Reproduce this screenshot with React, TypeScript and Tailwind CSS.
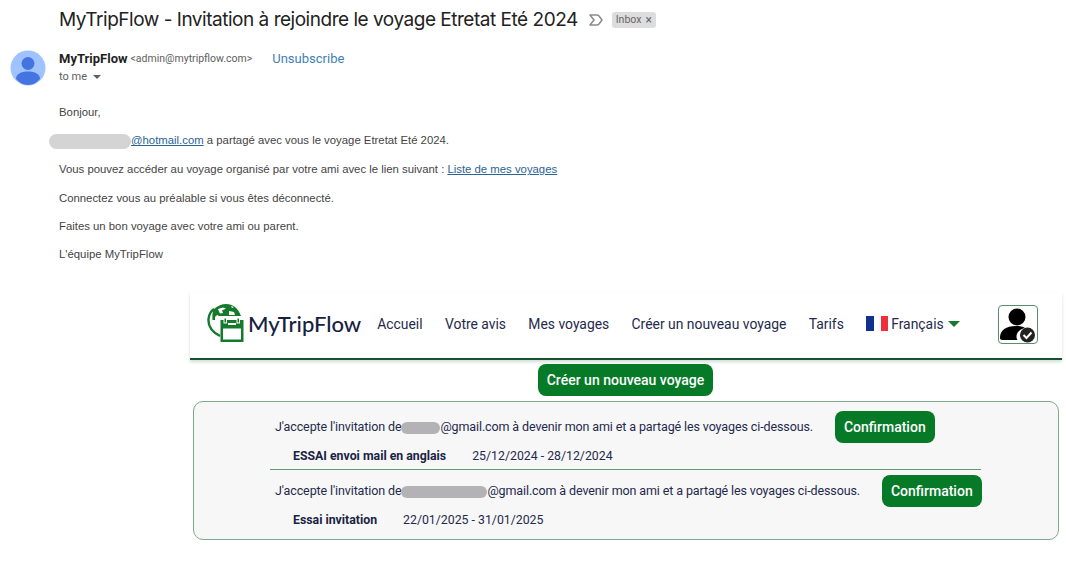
import React from "react";

function Avatar() {
  return (
    <svg width="36" height="36" viewBox="0 0 36 36" className="shrink-0">
      <circle cx="18" cy="18" r="17.5" fill="#a0c3ff" />
      <circle cx="18" cy="13.5" r="6.5" fill="#4374e0" />
      <path d="M6 29c0-5 5-7.500 12-7.500S30 24 30 29c-2.800 3-7 6-12 6S8.800 32 6 29z" fill="#4374e0" />
    </svg>
  );
}

function ImportanceMark() {
  return (
    <svg width="14" height="12" viewBox="0 0 14 12" fill="none" stroke="#8a8a8a" strokeWidth="1.500" strokeLinejoin="round">
      <path d="M1 1h7c1 0 1.500.4 2 1l3 4-3 4c-.5.6-1 1-2 1H1l4-5z" />
    </svg>
  );
}

function Logo() {
  return (
    <svg width="38" height="39" viewBox="0 0 38 39" className="shrink-0">
      <path d="M13 32C5 28 1 22 1.500 15 2 10 4 7 7 5" fill="none" stroke="#157a2b" strokeWidth="2.400" />
      <path d="M7 5C11 1.500 15 0 19 0c7 0 12 4 15 12H12l-2-1-2 2v3H5.500C5 11 5.500 8 7 5z" fill="#157a2b" />
      <path d="M11 5l5-1.500 3 1-4 2 1 2.500-3 .5-1-2zM22 7l5 1 1 3h-6zM24 2l3 1-2 1z" fill="#ffffff" />
      <rect x="13.500" y="16" width="23" height="22" fill="#157a2b" />
      <rect x="16" y="24.500" width="18" height="11" fill="#ffffff" />
      <rect x="17" y="14" width="2.500" height="5" fill="#157a2b" stroke="#ffffff" strokeWidth="1" />
      <rect x="30" y="14" width="2.500" height="5" fill="#157a2b" stroke="#ffffff" strokeWidth="1" />
      <rect x="21" y="19" width="8" height="2" fill="#ffffff" />
    </svg>
  );
}

function Flag() {
  return (
    <span className="flex h-[15px] w-[22px] shrink-0">
      <span className="flex-1 bg-[#12308f]" />
      <span className="flex-1 bg-white" />
      <span className="flex-1 bg-[#ee2f3f]" />
    </span>
  );
}

function UserCheck() {
  return (
    <svg width="36" height="36" viewBox="0 0 36 36">
      <circle cx="17" cy="10" r="8.500" fill="#000" />
      <path d="M2 33c-1 0-2-1-2-2 0-8 6-12 16-12 4 0 7 .6 9 2-5 1-8.500 4.500-8.500 8.500 0 1 .3 2.500 1 3.500z" fill="#000" />
      <circle cx="27.500" cy="28" r="7.500" fill="#222" />
      <path d="M23.500 28l3 3 5-5.500" stroke="#fff" strokeWidth="2" fill="none" />
    </svg>
  );
}

function Blur({ w }: { w: string }) {
  return <span className={`inline-block rounded-full align-middle ${w}`} />;
}

const NAV = ["Accueil", "Votre avis", "Mes voyages", "Créer un nouveau voyage", "Tarifs"];

export default function App() {
  return (
    <div className="h-[583px] w-[1066px] overflow-hidden bg-white font-['Liberation_Sans',sans-serif]">
      <div className="pl-[10px]">
        <div className="flex h-[40px] items-center pl-[49px]">
          <h1 className="whitespace-nowrap font-['Inter',sans-serif] text-[19px] font-normal tracking-[-0.48px] text-[#222222]">
            MyTripFlow - Invitation à rejoindre le voyage Etretat Eté 2024
          </h1>
          <span className="ml-[11px] flex"><ImportanceMark /></span>
          <span className="ml-[9px] flex h-[16px] w-[44px] items-center justify-center gap-[4px] rounded-[3px] bg-[#dddddd] font-['Roboto',sans-serif] text-[10.500px] text-[#666666]">
            Inbox <span className="text-[12px] leading-none">×</span>
          </span>
        </div>
        <div className="mt-[10px] flex">
          <Avatar />
          <div className="ml-[13px]">
            <div className="mt-[1px] flex h-[16px] items-center">
              <span className="font-['Roboto',sans-serif] text-[13px] font-bold text-[#1f1f1f]">MyTripFlow</span>
              <span className="ml-[3px] font-['Roboto',sans-serif] text-[10.500px] text-[#5e5e5e]">&lt;admin@mytripflow.com&gt;</span>
              <span className="ml-[20px] font-['Roboto',sans-serif] text-[13px] font-normal text-[#3f80b5]">Unsubscribe</span>
            </div>
            <div className="mt-[2px] flex h-[16px] items-center gap-[6px] font-['Roboto',sans-serif] text-[11px] text-[#5e5e5e]">
              to me
              <span className="h-0 w-0 border-x-[4px] border-t-[4px] border-x-transparent border-t-[#5e5e5e]" />
            </div>
          </div>
        </div>
      </div>

      <div className="mt-[18px] flex flex-col gap-[12.400px] pl-[59px] text-[11.350px] leading-[16px] text-[#444444]">
        <p>Bonjour,</p>
        <p className="-ml-[10px] whitespace-nowrap">
          <Blur w="h-[15px] w-[82px] bg-[#d4d4d4]" />
          <a className="text-[#2a6496] underline">@hotmail.com</a> a partagé avec vous le voyage Etretat Eté 2024.
        </p>
        <p>
          Vous pouvez accéder au voyage organisé par votre ami avec le lien suivant : <a className="text-[#2a6496] underline">Liste de mes voyages</a>
        </p>
        <p>Connectez vous au préalable si vous êtes déconnecté.</p>
        <p>Faites un bon voyage avec votre ami ou parent.</p>
        <p>L'équipe MyTripFlow</p>
      </div>

      <div className="mt-[31px] ml-[190px] w-[872px] font-['Roboto',sans-serif]">
        <nav className="flex h-[67px] items-center border-b-2 border-[#14532d] pb-[4px] pl-[17px] shadow-[0_2px_3px_rgba(20,90,40,0.2)]">
          <Logo />
          <span className="ml-[3px] font-['Lato',sans-serif] text-[22px] font-medium text-[#15213f]">MyTripFlow</span>
          <div className="ml-[16px] flex items-center gap-[22.300px] whitespace-nowrap text-[13.900px] text-[#1f2a4d]">
            {NAV.map((n) => (
              <span key={n}>{n}</span>
            ))}
            <span className="flex items-center gap-[3px]">
              <Flag />
              Français
              <span className="ml-[1px] h-0 w-0 border-x-[6px] border-t-[6px] border-x-transparent border-t-[#157a2b]" />
            </span>
          </div>
          <span className="mt-[2px] ml-[38px] flex h-[39px] w-[40px] items-center justify-center rounded-[4px] border border-[#5b8f6c]">
            <UserCheck />
          </span>
        </nav>

        <div className="mt-[4px] flex justify-center pr-[1px]">
          <button className="h-[32px] rounded-[8px] bg-[#067a27] px-[9px] text-[14px] font-medium text-white">Créer un nouveau voyage</button>
        </div>

        <div className="mt-[5px] ml-[3px] h-[139px] w-[866px] rounded-[10px] border border-[#7fa98b] bg-[#f7f7f7] pl-[76px] text-[#1f2a4d]">
          <div className="w-[711px]">
            <div className="flex h-[68px] flex-col border-b border-[#5f9a72]">
              <div className="mt-[9px] flex h-[32px] items-center pl-[5px] text-[12.500px] tracking-[-0.11px]">
                <span className="whitespace-nowrap">
                  J'accepte l'invitation de<Blur w="h-[12px] w-[39px] bg-[#b3b3b5]" />@gmail.com à devenir mon ami et a partagé les voyages ci-dessous.
                </span>
                <button className="ml-[22px] h-[32px] rounded-[8px] bg-[#067a27] px-[9px] text-[14px] font-medium tracking-normal text-white">Confirmation</button>
              </div>
              <div className="mt-[4px] flex pl-[23px] text-[12.300px]">
                <span className="font-bold text-[#1a2344]">ESSAI envoi mail en anglais</span>
                <span className="ml-[26px]">25/12/2024 - 28/12/2024</span>
              </div>
            </div>
            <div className="flex h-[70px] flex-col">
              <div className="mt-[5px] flex h-[32px] items-center pl-[5px] text-[12.500px] tracking-[-0.11px]">
                <span className="whitespace-nowrap">
                  J'accepte l'invitation de<Blur w="h-[12px] w-[86px] bg-[#b3b3b5]" />@gmail.com à devenir mon ami et a partagé les voyages ci-dessous.
                </span>
                <button className="ml-[22px] h-[32px] rounded-[8px] bg-[#067a27] px-[9px] text-[14px] font-medium tracking-normal text-white">Confirmation</button>
              </div>
              <div className="mt-[4px] flex pl-[23px] text-[12.300px]">
                <span className="font-bold text-[#1a2344]">Essai invitation</span>
                <span className="ml-[26px]">22/01/2025 - 31/01/2025</span>
              </div>
            </div>
          </div>
        </div>
      </div>
    </div>
  );
}
